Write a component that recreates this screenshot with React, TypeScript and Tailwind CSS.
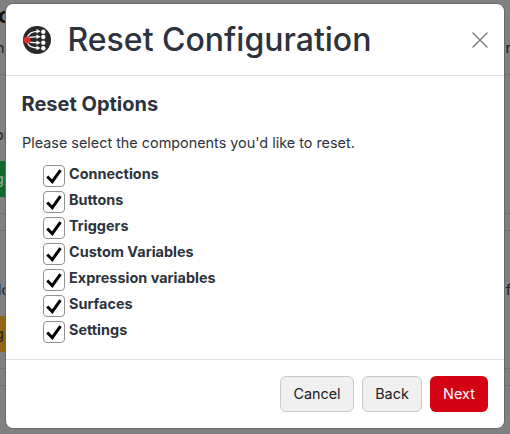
import React from 'react';

const options = ['Connections', 'Buttons', 'Triggers', 'Custom Variables', 'Expression variables', 'Surfaces', 'Settings'];

function Logo() {
  return (
    <svg width="30" height="30" viewBox="0 0 30 30" className="shrink-0">
      <circle cx="15" cy="15" r="14" fill="#292929" />
      <g stroke="#fff" strokeWidth="1.3" fill="none">
        <path d="M5.500 12C7 8 11 6.300 16 6.300M6 13.500C8 11.700 12 11.700 16 11.700M6 16.500C8 17.700 12 17.700 16 17.700M5.500 18C7 21.500 11 23 16 23" />
      </g>
      <g fill="#fff">
        <path d="M14.500 4l4 2.300-4 2.300zM14.500 9.400l4 2.300-4 2.300zM14.500 15.400l4 2.300-4 2.300zM14.500 20.700l4 2.300-4 2.300z" />
        <circle cx="21.300" cy="6.700" r="2.200" />
        <circle cx="21.300" cy="12" r="2.200" />
        <circle cx="21.300" cy="17.700" r="2.200" />
        <circle cx="21.300" cy="23.200" r="2.200" />
      </g>
      <circle cx="5" cy="15" r="3.500" fill="#df2b2b" />
    </svg>
  );
}

function Option({ label }: { label: string }) {
  return (
    <label className="flex h-[26px] items-start">
      <span className="mt-[2px] flex size-[22px] shrink-0 items-center justify-center rounded-[4px] border border-[#929292] bg-white">
        <svg width="20" height="20" viewBox="0 0 20 20" fill="none">
          <path d="M3.200 10.500L8.300 15.700L16.500 4.200" stroke="#000" strokeWidth="3" />
        </svg>
      </span>
      <span className="ml-1 text-[14.45px] font-bold leading-[22px]">{label}</span>
    </label>
  );
}

function Page() {
  return (
    <div className="flex h-[434px] flex-col overflow-hidden bg-[#7f8082] text-[14.4px] text-[#1b1c1f]">
      <div className="flex h-[75px] shrink-0 flex-col border-b border-[#707175]">
        <div className="-ml-[2px] h-[37px] text-[22px] font-bold leading-[31px] text-[#111]">c</div>
        <div className="-ml-[4px] flex justify-between leading-[22px]"><span>n</span><span className="-mr-[4px]">n</span></div>
      </div>
      <div className="h-[139px] shrink-0 border-b border-[#707175] pt-[49px]">
        <div className="-ml-[5px] h-[37px] leading-[22px]">on</div>
        <div className="h-[36px] w-20 -indent-[5px] bg-[#106a2d] leading-[36px] text-[#a0aaa3]">gu</div>
      </div>
      <div className="h-[17px] shrink-0 border-b border-[#707175]" />
      <div className="h-[138px] shrink-0 border-b border-[#707175] pt-[48px]">
        <div className="-ml-[2px] flex h-[37px] justify-between leading-[22px]"><span>lo</span><span className="-mr-px">nf</span></div>
        <div className="h-[36px] w-20 -indent-[5px] bg-[#916811] leading-[36px]">gu</div>
      </div>
      <div className="h-[17px] shrink-0 border-b border-[#707175]" />
    </div>
  );
}

export default function App() {
  return (
    <div className="relative h-[434px] w-[510px] overflow-hidden font-['Inter',sans-serif] text-[#2d333d]">
      <Page />
      <div role="dialog" className="absolute left-[5px] top-[3px] flex h-[426px] w-[500px] flex-col rounded-[8px] border border-[#68696b] bg-white">
        <header className="flex h-[72px] shrink-0 items-center border-b border-[#dcdde3] px-4">
          <Logo />
          <h1 className="ml-[15.5px] text-[32px] font-medium leading-[40px]">Reset Configuration</h1>
          <button aria-label="Close" className="ml-auto">
            <svg width="16" height="16" viewBox="0 0 16 16" fill="none" stroke="#858585" strokeWidth="1.600" strokeLinecap="round">
              <path d="M1 1L15 15M15 1L1 15" />
            </svg>
          </button>
        </header>
        <main className="h-[284px] shrink-0 border-b border-[#dcdde3] px-4 pt-4">
          <h2 className="-ml-[0.5px] text-[20px] font-bold leading-6">Reset Options</h2>
          <p className="mt-4 text-[14.4px] leading-[22px]">Please select the components you'd like to reset.</p>
          <div className="ml-[21px] mt-[9px]">
            {options.map((label) => <Option key={label} label={label} />)}
          </div>
        </main>
        <footer className="flex items-start justify-end gap-2 px-4 pt-4 text-[14.4px]">
          <button className="h-9 w-[74px] rounded-[6px] border border-[#c9c9c9] bg-[#f0f0f0] text-[#212121]">Cancel</button>
          <button className="h-9 w-[60px] rounded-[6px] border border-[#c9c9c9] bg-[#f0f0f0] text-[#212121]">Back</button>
          <button className="h-9 w-[58px] rounded-[6px] bg-[#d50215] text-white">Next</button>
        </footer>
      </div>
    </div>
  );
}
